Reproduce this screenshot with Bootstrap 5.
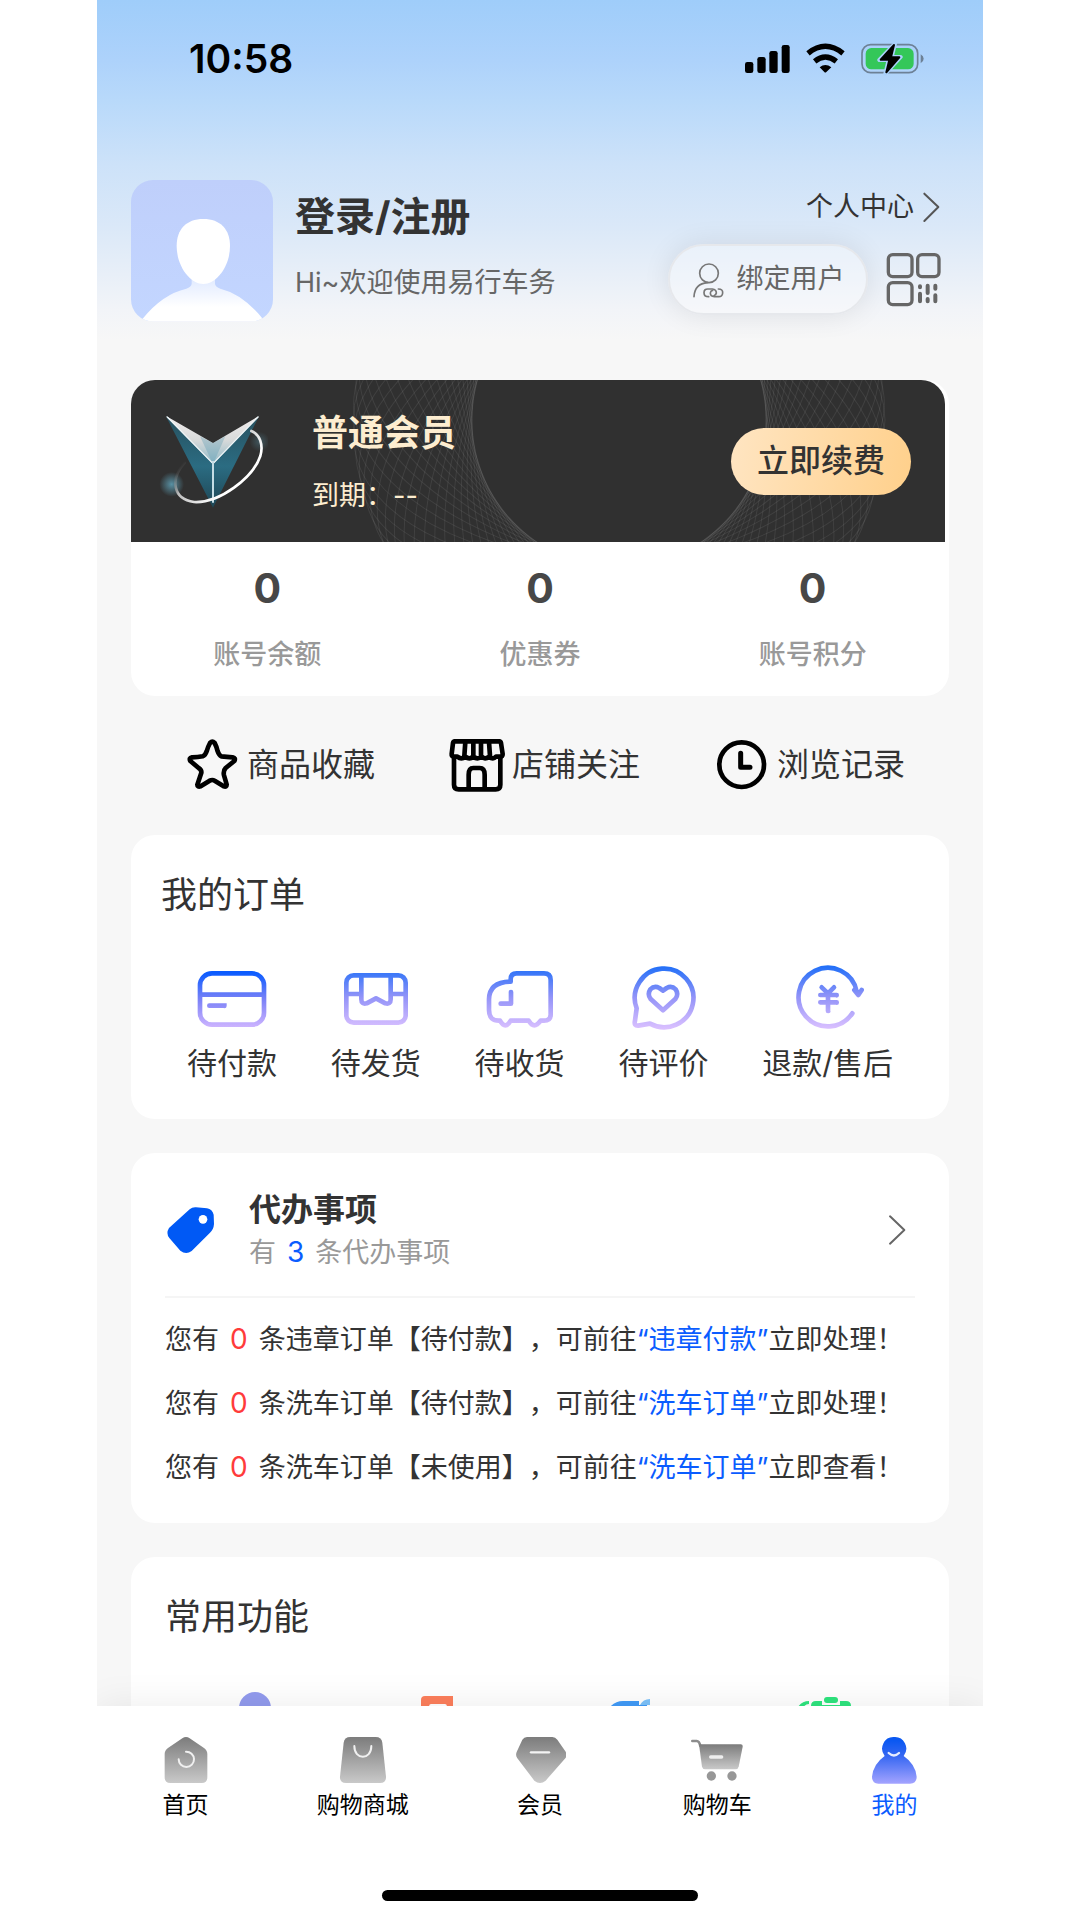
<!DOCTYPE html>
<html lang="zh-CN">
<head>
<meta charset="utf-8">
<meta name="viewport" content="width=device-width, initial-scale=1">
<title>我的</title>
<link href="https://cdn.jsdelivr.net/npm/bootstrap@5.3.0/dist/css/bootstrap.min.css" rel="stylesheet">
<style>
  body { background: #fff; color: #333; font-family: Inter, "Noto Sans CJK SC", sans-serif; font-size: 27px; line-height: 36px; text-spacing-trim: space-all; }
  a { color: inherit; text-decoration: none; }
  svg { display: block; flex: none; }
  .phone { max-width: 886px; background: #f7f7f7; }
  .scroller { min-height: 0; background: linear-gradient(#9fcdfa 0, #add2fb 60px, #b8d9fa 100px, #cde2f9 165px, #dae8f8 225px, #f2f4f8 310px, #f7f7f7 340px); }
  .statusbar { padding: 42px 57px 43px 92px; }
  .clock { font-size: 39px; font-weight: 600; line-height: 34px; color: #000; }
  .content { padding: 61px 34px 0; }
  .profile { margin-bottom: 58px; }
  .hello { padding: 9px 0 0 22px; }
  .hello h1 { font-size: 40px; line-height: 56px; font-weight: 700; margin: 0 0 20px; }
  .muted { color: #666; }
  .account { padding: 9px 7px 0 0; gap: 19px; }
  .bind { width: 200px; height: 71px; padding: 0; gap: 13px; font-size: 27px; color: #666; border: 2px solid #e6e8ec; border-radius: 36px; background: rgba(255,255,255,.3); box-shadow: 0 0 28px rgba(0,0,0,.09); }
  .panel { background: #fff; border-radius: 24px; }
  .member { height: 162px; margin-right: 4px; padding: 0 34px 0 27px; background: #303030; border-radius: 24px 24px 0 0; color: #fdedd0; }
  .member .rosette { inset: 0; width: 100%; height: 100%; }
  .member h2 { font-size: 36px; line-height: 48px; font-weight: 700; margin: 0 0 21px; }
  .level { margin-left: 44px; }
  .renew { width: 180px; height: 67px; padding: 0; border: 0; border-radius: 34px; font-size: 32px; font-weight: 500; color: #333; background: linear-gradient(100deg, #ffe5c2, #ffd08b); }
  .stats { padding: 21px 0; font-weight: 500; color: #999; line-height: 40px; }
  .stats b { font-size: 41px; line-height: 50px; color: #474747; margin-bottom: 22px; font-weight: 700; }
  .shortcuts { padding: 41px 44px 42px 53px; font-size: 32px; }
  .shortcuts a { gap: 7px; }
  .section-title { font-size: 36px; line-height: 48px; font-weight: 400; margin: 0; }
  .orders { padding: 36px 30px; margin-bottom: 34px; }
  .orders nav { padding: 43px 26px 0; font-size: 30px; line-height: 40px; }
  .orders nav a { gap: 9px; }
  .todo { padding: 37px 34px 23px; margin-bottom: 34px; }
  .todo-head { padding: 0 8px 20px 0; border-bottom: 2px solid #f5f5f5; margin-bottom: 10px; }
  .todo-head svg { margin-bottom: 6px; }
  .todo-head h2 { font-size: 32px; line-height: 40px; font-weight: 700; margin: 0; }
  .todo-head p { line-height: 46px; color: #999; margin: 0; }
  .todo-text { margin-left: 34px; }
  .todo li { line-height: 64px; white-space: nowrap; }
  .num { font-size: 28px; line-height: 28px; margin: 0 11px; }
  .red { color: #ff3b3b; }
  .blue { color: #0a5cff; }
  .tools { padding: 36px 29px; }
  .tools .section-title { padding-left: 5px; margin-bottom: 49px; }
  .tabbar { z-index: 1; padding: 28px 0 19px; background: #fff; font-size: 23px; line-height: 30px; color: #000; box-shadow: 0 0 36px rgba(0,0,0,.08); }
  .tabbar nav { margin-bottom: 70px; }
  .tabbar a { gap: 4px; }
  .home-bar { width: 316px; height: 11px; border-radius: 6px; background: #000; }
</style>
<script src="https://cdn.jsdelivr.net/npm/bootstrap@5.3.0/dist/js/bootstrap.bundle.min.js"></script>
</head>
<body>
<div class="phone vh-100 mx-auto d-flex flex-column overflow-hidden">
  <div class="scroller flex-grow-1 overflow-hidden">
    <div class="statusbar d-flex justify-content-between align-items-center">
      <span class="clock">10:58</span>
      <svg width="182" height="34" viewBox="612 126 546 102" aria-hidden="true">
        <rect x="615" y="186" width="25" height="33" rx="7"/><rect x="652" y="171" width="25" height="48" rx="7"/><rect x="688" y="153" width="25" height="66" rx="7"/><rect x="725" y="135" width="24" height="84" rx="7"/>
        <path d="M804 160Q856 118 909 160" fill="none" stroke="#000" stroke-width="16"/>
        <path d="M824 184Q856 158 889 184" fill="none" stroke="#000" stroke-width="16"/>
        <path d="M839 202Q856 188 874 202L859 216Q856 219 853 216Z"/>
        <rect x="966" y="134" width="167" height="84" rx="26" fill="none" stroke="#6d8196" stroke-width="5"/>
        <path d="M1142 163Q1151 168 1151 176T1142 190Z" fill="#6d8196"/>
        <rect x="977" y="144" width="144" height="64" rx="17" fill="#34c759"/>
        <path d="M1065 131L1018 180H1046L1036 221L1082 171H1055Z" stroke="#aad1fb" stroke-width="12" stroke-linejoin="round"/>
        <path d="M1062 135L1022 179H1048L1039 217L1078 172H1053Z" stroke="#000" stroke-width="6" stroke-linejoin="round"/>
      </svg>
    </div>

    <main class="content">
      <header class="profile d-flex">
        <svg width="142" height="142" viewBox="120 540 426 426" aria-hidden="true">
          <defs><linearGradient id="av" x2="0" y2="1"><stop stop-color="#bfcffb"/><stop offset="1" stop-color="#c3d6ff"/></linearGradient>
          <linearGradient id="body" x2="0" y2="1"><stop stop-color="#dfe9ff"/><stop offset=".65" stop-color="#fff"/></linearGradient>
          <clipPath id="avc"><rect x="120" y="540" width="426" height="424" rx="66"/></clipPath></defs>
          <g clip-path="url(#avc)"><rect x="120" y="540" width="426" height="424" fill="url(#av)"/>
          <path d="M302 830V852Q300 862 286 866Q215 882 155 956V970H515V956Q455 882 388 866Q374 862 372 852V830Z" fill="url(#body)"/>
          <path d="M337 657C388 657 417 688 417 738C417 800 376 852 337 852S257 800 257 738C257 688 286 657 337 657Z" fill="#fff"/></g>
        </svg>
        <div class="hello me-auto">
          <h1>登录/注册</h1>
          <div class="muted">Hi~欢迎使用易行车务</div>
        </div>
        <div class="account d-flex flex-column align-items-end">
          <a href="#" class="d-flex align-items-center gap-2">个人中心
            <svg width="20" height="32" viewBox="1146 570 60 96" aria-hidden="true"><path d="M1153 578L1195 618L1153 660" fill="none" stroke="#555" stroke-width="6" stroke-linecap="round" stroke-linejoin="round"/></svg>
          </a>
          <div class="d-flex align-items-center">
            <button type="button" class="bind btn d-flex align-items-center justify-content-center">
              <svg width="32" height="36" viewBox="453 781 96 108" fill="none" stroke="#777" stroke-width="5" stroke-linecap="round" aria-hidden="true"><circle cx="504" cy="815" r="28"/><path d="M459 885Q461 846 500 843"/><path d="M503 885Q489 885 489 873T502 862H514Q526 863 526 874Q525 880 519 882"/><path d="M532 862Q546 862 545 874T532 885H520Q508 884 508 874Q509 867 515 866"/></svg>
              <span>绑定用户</span>
            </button>
            <a href="#" aria-label="二维码" class="ms-3">
              <svg width="58" height="58" viewBox="1032 749 174 174" fill="none" stroke="#666" stroke-width="10" stroke-linecap="round" aria-hidden="true"><rect x="1045" y="760" width="71" height="66" rx="13"/><rect x="1133" y="760" width="64" height="66" rx="13"/><rect x="1045" y="844" width="71" height="66" rx="13"/><path stroke-width="12" d="M1140 855V858M1140 877V900M1163 853V875M1163 893V900M1186 853V862M1186 882V900"/></svg>
            </a>
          </div>
        </div>
      </header>

      <section class="panel">
        <div class="member position-relative overflow-hidden d-flex align-items-center">
          <svg class="rosette position-absolute" viewBox="0 0 814 162" preserveAspectRatio="xMidYMid slice" fill="none" stroke="#fff" stroke-opacity=".08" aria-hidden="true"></svg>
          <svg class="position-relative" width="110" height="100" viewBox="120 120 330 300" aria-hidden="true">
            <defs><linearGradient id="wing" x2="0" y2="1"><stop stop-color="#f2eeee"/><stop offset=".5" stop-color="#d8dada"/><stop offset="1" stop-color="#8fb9c7"/></linearGradient>
            <linearGradient id="teal" x2="0" y2="1"><stop stop-color="#27505e"/><stop offset=".55" stop-color="#2b6c82"/><stop offset="1" stop-color="#1e4655"/></linearGradient>
            <linearGradient id="ring" gradientUnits="userSpaceOnUse" x1="190" y1="280" x2="300" y2="380"><stop stop-color="#777" stop-opacity="0"/><stop offset=".35" stop-color="#bbb"/><stop offset="1" stop-color="#fff"/></linearGradient>
            <radialGradient id="glow"><stop stop-color="#5d9bb0" stop-opacity=".9"/><stop offset="1" stop-color="#5d9bb0" stop-opacity="0"/></radialGradient></defs>
            <circle cx="161" cy="340" r="37" fill="url(#glow)"/><circle cx="425" cy="212" r="30" fill="url(#glow)" opacity=".4"/>
            <path d="M143 134L285 410L424 134L285 270Z" fill="url(#teal)"/>
            <path d="M143 134L285 216L424 134L285 280Z" fill="url(#wing)"/>
            <path d="M285 216L322 196L285 280L246 196Z" fill="#5b9cb3" opacity=".35"/>
            <path d="M147 137L285 278L421 137" fill="none" stroke="#eef4f6" stroke-width="4"/>
            <path d="M285 270V395" stroke="#c5dde5" stroke-width="6"/>
            <path d="M200 275C155 325 165 385 228 393C305 397 405 320 427 255C437 220 425 190 400 180" fill="none" stroke="url(#ring)" stroke-width="8" stroke-linecap="round"/>
          </svg>
          <div class="level position-relative me-auto">
            <h2>普通会员</h2>
            <div>到期：--</div>
          </div>
          <button type="button" class="renew btn position-relative">立即续费</button>
        </div>
        <div class="stats row g-0 text-center">
          <div class="col"><b class="d-block">0</b>账号余额</div>
          <div class="col"><b class="d-block">0</b>优惠券</div>
          <div class="col"><b class="d-block">0</b>账号积分</div>
        </div>
      </section>

      <nav class="shortcuts d-flex justify-content-between">
        <a href="#" class="d-flex align-items-center">
          <svg width="56" height="56" viewBox="192 81 168 168" fill="none" stroke="#000" stroke-width="14" stroke-linejoin="round" aria-hidden="true"><path d="M270 99Q277 92 284 99Q289 108 293 124Q297 136 304 139Q320 141 338 142Q348 144 343 153L317 174Q309 182 312 196Q317 212 320 224Q320 232 311 229L284 212Q277 208 269 212L242 229Q232 232 232 224L244 188Q245 180 236 174L211 153Q206 144 216 142Q234 142 248 139Q256 136 260 124Q264 110 270 99Z"/></svg>商品收藏</a>
        <a href="#" class="d-flex align-items-center">
          <svg width="56" height="56" viewBox="987 81 168 168" fill="none" stroke="#000" stroke-width="14" stroke-linejoin="round" stroke-linecap="round" aria-hidden="true"><path d="M1004 94H1138Q1142 94 1143 99L1148 132Q1148 140 1140 140H1128Q1119 150 1108 140Q1094 150 1086 140Q1072 150 1060 140Q1048 150 1036 140Q1024 150 1012 140H1002Q994 140 995 132L999 99Q1000 94 1004 94ZM1036 96L1033 138M1060 96V138M1083 96V138M1107 96L1110 138"/><path d="M1002 144V224Q1002 238 1016 238H1127Q1141 238 1141 224V144M1046 236V194Q1046 174 1060 174H1079Q1094 174 1094 194V236"/></svg>店铺关注</a>
        <a href="#" class="d-flex align-items-center">
          <svg width="56" height="56" viewBox="522 81 168 168" fill="none" stroke="#000" stroke-width="14" stroke-linecap="round" stroke-linejoin="round" aria-hidden="true"><circle cx="605" cy="164" r="67"/><path stroke-width="15" d="M602 130V172H630"/></svg>浏览记录</a>
      </nav>

      <section class="panel orders">
        <h2 class="section-title">我的订单</h2>
        <nav class="d-flex justify-content-between">
          <a href="#" class="d-flex flex-column align-items-center">
            <svg width="72" height="72" viewBox="228 756 216 216" fill="none" stroke="url(#g1)" stroke-width="14" stroke-linecap="round" aria-hidden="true"><defs><linearGradient id="g1" gradientUnits="userSpaceOnUse" x1="0" y1="788" x2="0" y2="952"><stop stop-color="#0b5cff"/><stop offset=".5" stop-color="#7c82f7"/><stop offset="1" stop-color="#cdb4ff"/></linearGradient></defs><rect x="240" y="790" width="192" height="154" rx="36"/><path d="M242 854H430V855"/><path d="M268 887H313V888"/></svg>待付款</a>
          <a href="#" class="d-flex flex-column align-items-center">
            <svg width="72" height="72" viewBox="660 756 216 216" fill="none" stroke="url(#g2)" stroke-width="14" stroke-linecap="round" stroke-linejoin="round" aria-hidden="true"><defs><linearGradient id="g2" gradientUnits="userSpaceOnUse" x1="0" y1="770" x2="0" y2="956"><stop stop-color="#2370f8"/><stop offset=".5" stop-color="#9494f8"/><stop offset="1" stop-color="#dac0ff"/></linearGradient></defs><rect x="679" y="796" width="178" height="142" rx="22"/><path d="M681 852H722M814 852H855V853M724 800V868Q724 884 740 880L768 865L796 880Q812 884 812 868V800"/></svg>待发货</a>
          <a href="#" class="d-flex flex-column align-items-center">
            <svg width="72" height="72" viewBox="1096 756 216 216" fill="none" stroke="url(#g2)" stroke-width="14" stroke-linecap="round" stroke-linejoin="round" aria-hidden="true"><path d="M1176 815V808Q1176 790 1194 790H1276Q1296 790 1296 810V914Q1296 932 1276 932H1266Q1246 960 1230 932H1176Q1160 960 1144 932Q1111 934 1111 900V868Q1112 816 1176 815ZM1177 846V881H1146"/></svg>待收货</a>
          <a href="#" class="d-flex flex-column align-items-center">
            <svg width="72" height="72" viewBox="264 756 216 216" fill="none" stroke="url(#g2)" stroke-width="14" stroke-linecap="round" stroke-linejoin="round" aria-hidden="true"><path d="M293 895A88 88 0 1 1 333 941L298 947Q284 948 288 932Z"/><path d="M372 901L335 867Q324 853 334 838Q346 826 361 834L372 842L383 834Q398 826 410 838Q420 853 409 867Z"/></svg>待评价</a>
          <a href="#" class="d-flex flex-column align-items-center">
            <svg width="72" height="72" viewBox="756 756 216 216" fill="none" stroke="url(#g2)" stroke-width="14" stroke-linecap="round" stroke-linejoin="round" aria-hidden="true"><path d="M937 910A88 88 0 1 1 950 844L955 855L965 840M943 840L955 855"/><path d="M845 832L864 850L882 832M841 855H890V856M841 877H890V878M864 852V903H865"/></svg>退款/售后</a>
        </nav>
      </section>

      <section class="panel todo">
        <a href="#" class="todo-head d-flex align-items-center">
          <svg width="50" height="50" viewBox="132 195 150 150" aria-hidden="true"><path d="M206 208Q214 201 225 202L258 205Q274 208 278 224L279 252Q278 268 267 278L212 333Q195 345 178 332L145 294Q134 280 144 264Z" fill="#0059f5"/><circle cx="246" cy="238" r="13" fill="#fff"/></svg>
          <div class="todo-text me-auto">
            <h2>代办事项</h2>
            <p>有<span class="num blue">3</span>条代办事项</p>
          </div>
          <svg width="20" height="32" viewBox="1041 224 60 96" aria-hidden="true"><path d="M1050 231L1093 272L1050 313" fill="none" stroke="#666" stroke-width="6" stroke-linecap="round" stroke-linejoin="round"/></svg>
        </a>
        <ul class="list-unstyled m-0">
          <li>您有<span class="num red">0</span>条违章订单【待付款】，可前往<a href="#" class="blue">“违章付款”</a>立即处理！</li>
          <li>您有<span class="num red">0</span>条洗车订单【待付款】，可前往<a href="#" class="blue">“洗车订单”</a>立即处理！</li>
          <li>您有<span class="num red">0</span>条洗车订单【未使用】，可前往<a href="#" class="blue">“洗车订单”</a>立即查看！</li>
        </ul>
      </section>

      <section class="panel tools">
        <h2 class="section-title">常用功能</h2>
        <div class="row g-0">
          <div class="col d-flex justify-content-center"><svg width="64" height="64" viewBox="0 0 64 64" fill="#929bee" aria-hidden="true"><circle cx="32" cy="18" r="16"/><path d="M6 62Q6 38 32 38T58 62Z"/></svg></div>
          <div class="col d-flex justify-content-center"><svg width="64" height="64" viewBox="0 0 64 64" aria-hidden="true"><path d="M12 6H40V60H8V10Q8 6 12 6Z" fill="#fd7f5c"/><path d="M18 14H32Q34 14 34 17V26H16V17Q16 14 18 14Z" fill="#fff"/></svg></div>
          <div class="col d-flex justify-content-center"><svg width="64" height="64" viewBox="0 0 64 64" aria-hidden="true"><path d="M36 11H20Q12 11 6 18V56H44V15H36Z" fill="#419bf8"/><path d="M37 15Q40 9 47 9V15Z" fill="#7cc2fa"/></svg></div>
          <div class="col d-flex justify-content-center"><svg width="64" height="64" viewBox="0 0 64 64" fill="#2ee57e" aria-hidden="true"><rect x="31" y="7" width="14" height="6" rx="3"/><path d="M5 17Q9 11 16 11V14Q12 14 10 18ZM18 16Q18 11 23 11H29V15H47V11H53Q58 11 58 16V58H18Z"/></svg></div>
        </div>
      </section>
    </main>
  </div>

  <footer class="tabbar flex-shrink-0">
    <nav class="row g-0">
      <a href="#" class="col d-flex flex-column align-items-center">
        <svg width="52" height="52" viewBox="206 580 156 156" aria-hidden="true"><defs><linearGradient id="gray" x2="0" y2="1"><stop stop-color="#7c7c7c"/><stop offset="1" stop-color="#c9c9c9"/></linearGradient></defs><path d="M273 593Q284 585 295 593L338 622Q348 629 348 640V710Q348 727 331 727H237Q220 727 220 710V640Q220 629 230 622Z" fill="url(#gray)"/><path d="M262 656A23 23 0 1 0 284 633" fill="none" stroke="#f0f0f0" stroke-width="6" stroke-linecap="round"/></svg>首页</a>
      <a href="#" class="col d-flex flex-column align-items-center">
        <svg width="52" height="52" viewBox="737 580 156 156" aria-hidden="true"><path d="M777 589H853Q871 589 873 606L884 708Q885 727 866 727H764Q745 727 746 708L757 606Q759 589 777 589Z" fill="url(#gray)"/><path d="M789 616C789 659 840 659 840 616" fill="none" stroke="#f0f0f0" stroke-width="6" stroke-linecap="round"/></svg>购物商城</a>
      <a href="#" class="col d-flex flex-column align-items-center">
        <svg width="52" height="52" viewBox="1272 580 156 156" aria-hidden="true"><path d="M1311 589H1387Q1396 589 1402 597L1426 632Q1434 643 1426 653L1367 720Q1350 734 1333 720L1282 653Q1275 643 1281 632L1297 597Q1302 589 1311 589Z" fill="url(#gray)"/><path d="M1323 635H1377" stroke="#f4f4f4" stroke-width="7" stroke-linecap="round"/></svg>会员</a>
      <a href="#" class="col d-flex flex-column align-items-center">
        <svg width="52" height="52" viewBox="457 580 156 156" aria-hidden="true"><path d="M461 601H474Q482 601 485 616" fill="none" stroke="#8c8c8c" stroke-width="8" stroke-linecap="round"/><path d="M481 611H606Q613 611 612 618L600 678Q598 686 590 686H500Q492 686 490 678Z" fill="url(#gray)"/><path d="M516 649H549" stroke="#eee" stroke-width="10" stroke-linecap="round"/><g fill="#979797"><circle cx="518" cy="706" r="14"/><circle cx="580" cy="706" r="14"/></g></svg>购物车</a>
      <a href="#" class="col d-flex flex-column align-items-center blue" aria-current="page">
        <svg width="52" height="52" viewBox="988 580 156 156" aria-hidden="true"><defs><linearGradient id="me" gradientUnits="userSpaceOnUse" x1="0" y1="600" x2="0" y2="730"><stop stop-color="#0a58f2"/><stop offset=".35" stop-color="#3667f2"/><stop offset="1" stop-color="#a5a4ff"/></linearGradient></defs><path d="M1066 589A34 35 0 0 1 1095 646Q1130 670 1134 708Q1134 729 1114 729H1019Q1000 729 1000 708Q1004 670 1038 646A34 35 0 0 1 1066 589Z" fill="url(#me)"/><path d="M1050 637Q1066 652 1081 637" fill="none" stroke="#e6ecff" stroke-width="7" stroke-linecap="round"/></svg>我的</a>
    </nav>
    <div class="home-bar mx-auto"></div>
  </footer>
</div>
<script>
  // Rotated ellipses weave the ring pattern behind the membership banner.
  const rosette = document.querySelector('.rosette');
  const count = 36;
  for (let i = 0; i < count; i++) {
    const e = document.createElementNS('http://www.w3.org/2000/svg', 'ellipse');
    e.setAttribute('cx', 488); e.setAttribute('cy', 40);
    e.setAttribute('rx', 266); e.setAttribute('ry', 147);
    e.setAttribute('transform', `rotate(${i * 180 / count} 488 40)`);
    rosette.append(e);
  }
</script>
</body>
</html>
